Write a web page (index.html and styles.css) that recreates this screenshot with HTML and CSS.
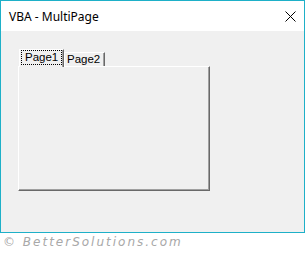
FILE: index.html
```html
<!DOCTYPE html>
<html>
<head>
<meta charset="utf-8">
<link rel="stylesheet" href="styles.css">
</head>
<body>
<div class="window">
  <div class="titlebar">
    <span class="title">VBA - MultiPage</span>
    <svg class="close" width="11" height="11" viewBox="0 0 11 11"><path d="M0.5 0.5 L10.5 10.5 M10.5 0.5 L0.5 10.5" stroke="#000" stroke-width="1" fill="none"/></svg>
  </div>
  <div class="client">
    <div class="multipage">
      <div class="tabs">
        <div class="tab sel"><span class="focus">Page1</span></div>
        <div class="tab">Page2</div>
      </div>
      <div class="frame"></div>
    </div>
  </div>
</div>
<div class="footer">© BetterSolutions.com</div>
</body>
</html>
```
FILE: styles.css
```css
html, body {
  margin: 0;
  padding: 0;
  background: #ffffff;
}
.window {
  box-sizing: border-box;
  width: 305px;
  height: 233px;
  border: 1px solid #1eb0c8;
  display: flex;
  flex-direction: column;
}
.titlebar {
  height: 30px;
  background: #ffffff;
  display: flex;
  align-items: center;
  justify-content: space-between;
  padding: 0 8px 0 8px;
}
.title {
  font-family: "Noto Sans", sans-serif;
  font-size: 12px;
  color: #000;
}
.close {
  display: block;
}
.client {
  flex: 1;
  background: #f0f0f0;
  padding: 18px 0 0 17px;
}
.multipage {
  width: 192px;
  font-family: "Liberation Sans", Arial, sans-serif;
  font-size: 11.5px;
  color: #000;
}
.tabs {
  display: flex;
  align-items: flex-end;
  padding-left: 1px;
  position: relative;
  z-index: 1;
}
.tab {
  box-sizing: border-box;
  height: 14px;
  width: 41px;
  border-top: 1px solid #fff;
  border-left: 1px solid #fff;
  border-right: 1px solid #696969;
  box-shadow: inset -1px 0 0 #a0a0a0;
  background: #f0f0f0;
  padding: 0 0 0 2px;
  line-height: 13px;
}
.tab.sel {
  height: 18px;
  width: 45px;
  margin-bottom: -1px;
  padding: 0 0 0 1px;
}
.focus {
  display: block;
  box-sizing: border-box;
  width: 41px;
  height: 15px;
  border: 1px dotted #000;
  padding: 0 0 0 3px;
  line-height: 13px;
}
.frame {
  box-sizing: border-box;
  height: 125px;
  border-top: 1px solid #fff;
  border-left: 1px solid #fff;
  border-right: 1px solid #696969;
  border-bottom: 1px solid #696969;
  box-shadow: inset -1px -1px 0 #a0a0a0;
  background: #f0f0f0;
}
.footer {
  font-family: "DejaVu Sans", sans-serif;
  font-style: italic;
  font-size: 12px;
  letter-spacing: 2px;
  color: #a8a8a8;
  padding: 2px 0 0 3px;
}
```
